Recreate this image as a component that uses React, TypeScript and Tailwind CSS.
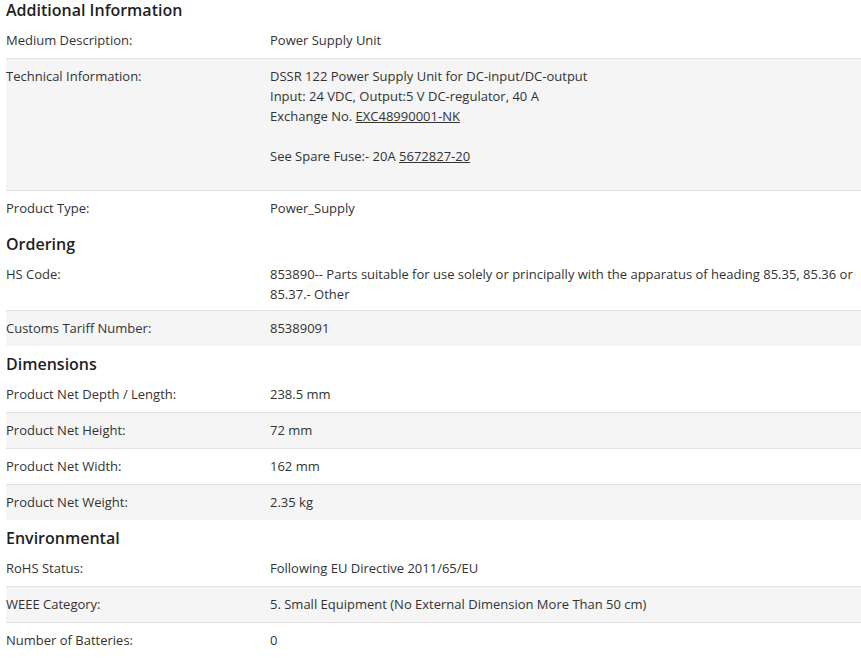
import { ReactNode } from 'react';

type Row = { label: string; value: ReactNode; tight?: boolean };

const sections: { title: string; rows: Row[] }[] = [
  {
    title: 'Additional Information',
    rows: [
      { label: 'Medium Description:', value: 'Power Supply Unit' },
      {
        label: 'Technical Information:',
        value: (
          <>
            <div>DSSR 122 Power Supply Unit for DC-input/DC-output</div>
            <div>Input: 24 VDC, Output:5 V DC-regulator, 40 A</div>
            <div>
              Exchange No. <a className="underline">EXC48990001-NK</a>
            </div>
            <div className="h-5"></div>
            <div>
              See Spare Fuse:- 20A <a className="underline">5672827-20</a>
            </div>
            <div className="h-4"></div>
          </>
        ),
      },
      { label: 'Product Type:', value: 'Power_Supply' },
    ],
  },
  {
    title: 'Ordering',
    rows: [
      {
        label: 'HS Code:',
        value:
          '853890-- Parts suitable for use solely or principally with the apparatus of heading 85.35, 85.36 or 85.37.- Other',
        tight: true,
      },
      { label: 'Customs Tariff Number:', value: '85389091' },
    ],
  },
  {
    title: 'Dimensions',
    rows: [
      { label: 'Product Net Depth / Length:', value: '238.5 mm' },
      { label: 'Product Net Height:', value: '72 mm' },
      { label: 'Product Net Width:', value: '162 mm' },
      { label: 'Product Net Weight:', value: '2.35 kg' },
    ],
  },
  {
    title: 'Environmental',
    rows: [
      { label: 'RoHS Status:', value: 'Following EU Directive 2011/65/EU' },
      { label: 'WEEE Category:', value: '5. Small Equipment (No External Dimension More Than 50 cm)' },
      { label: 'Number of Batteries:', value: '0' },
    ],
  },
];

export default function App() {
  return (
    <div className="min-h-screen bg-white pl-[6px] text-[13px] text-[#333333] font-['Open_Sans',sans-serif]">
      {sections.map((s) => (
        <section key={s.title} className="mb-[8px]">
          <h2 className="text-[16px] font-semibold leading-5 pb-[3px] text-[#1f1f1f]">{s.title}</h2>
          {s.rows.map((r, i) => (
            <div
              key={r.label}
              className={`flex pt-[7px] leading-5 ${r.tight ? 'pb-[6px]' : 'pb-[8px]'} ${i > 0 ? 'border-t border-[#e0e0e0]' : ''} ${i % 2 === 1 ? 'bg-[#f5f5f5]' : ''}`}
            >
              <div className="w-[264px] shrink-0">{r.label}</div>
              <div className="flex-1 pr-1">{r.value}</div>
            </div>
          ))}
        </section>
      ))}
    </div>
  );
}
